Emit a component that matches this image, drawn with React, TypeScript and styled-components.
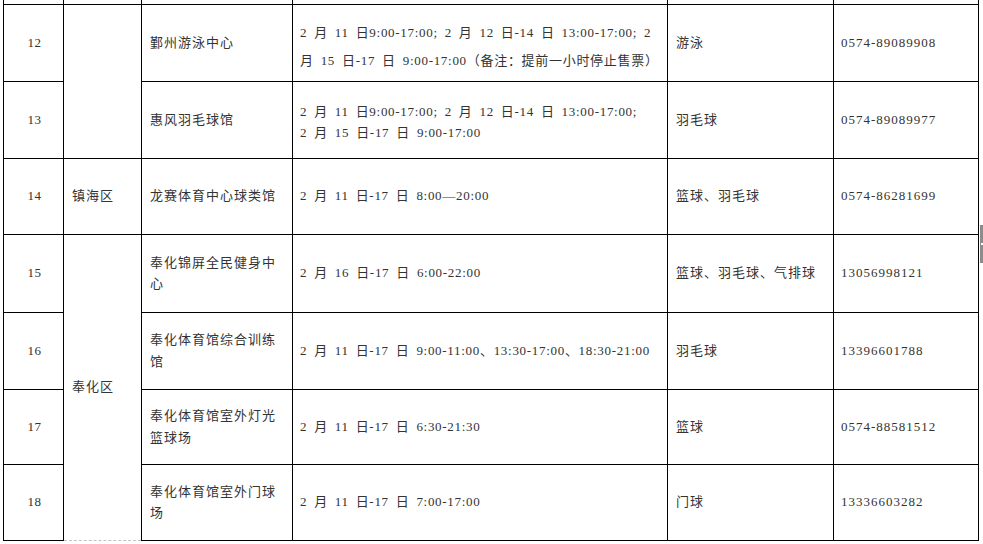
import styled, { createGlobalStyle } from 'styled-components'

const GlobalStyle = createGlobalStyle`
  html, body {
    margin: 0;
    padding: 0;
    background: #fff;
  }
  body {
    font-family: "Liberation Serif", "Noto Sans CJK SC", serif;
    color: #333;
  }
`

const Page = styled.div`
  position: relative;
  width: 983px;
  height: 544px;
  overflow: hidden;
  padding-left: 3px;
  box-sizing: border-box;
`

const Table = styled.table`
  border-collapse: collapse;
  table-layout: fixed;
  width: 976px;
`

const Row = styled.tr<{ $h: number }>`
  height: ${p => p.$h}px;
`

const Cell = styled.td<{ $lh?: number; $pt?: number }>`
  border: 1px solid #000;
  padding: ${p => p.$pt ?? 0}px 6px 0 8px;
  vertical-align: middle;
  text-align: left;
  font-size: 13px;
  letter-spacing: 1px;
  line-height: ${p => p.$lh ?? 21.5}px;
  white-space: nowrap;
  overflow: visible;
`

const StubCell = styled.td`
  border: 1px solid #000;
  border-top: none;
  padding: 0;
  height: 3px;
`

const NumCell = styled(Cell)`
  text-align: center;
  padding: 0 0 0 2px;
  letter-spacing: 0.5px;
`

const DistrictCell = styled(Cell)<{ $dashed?: boolean }>`
  border-bottom: ${p => (p.$dashed ? '1px dashed #c4c4c4' : '1px solid #000')};
`

const TimeCell = styled(Cell)`
  padding-left: 7px;
  letter-spacing: 0.7px;
  word-spacing: 3px;
`

const PhoneCell = styled(Cell)`
  padding-left: 7px;
  letter-spacing: 1px;
`

const Line = styled.span`
  display: block;
`

const EdgeTab = styled.div`
  position: absolute;
  right: 0;
  top: 225px;
  width: 3px;
  height: 38px;
  background: #8c8c8c;

  &::after {
    content: '';
    position: absolute;
    left: 1px;
    right: 0;
    top: 18px;
    height: 2px;
    background: #fff;
  }
`

type Venue = {
  no: string
  h: number
  district?: { name: string; span: number; dashed?: boolean }
  skipDistrict?: boolean
  name: string[]
  time: string[]
  timeLh?: number
  timePt?: number
  sport: string
  phone: string
}

const venues: Venue[] = [
  {
    no: '12',
    h: 77,
    district: { name: '', span: 2 },
    name: ['鄞州游泳中心'],
    time: [
      '2 月 11 日9:00-17:00; 2 月 12 日-14 日 13:00-17:00; 2',
      '月 15 日-17 日 9:00-17:00（备注：提前一小时停止售票）',
    ],
    timeLh: 28,
    timePt: 8,
    sport: '游泳',
    phone: '0574-89089908',
  },
  {
    no: '13',
    h: 77,
    skipDistrict: true,
    name: ['惠风羽毛球馆'],
    time: ['2 月 11 日9:00-17:00; 2 月 12 日-14 日 13:00-17:00;', '2 月 15 日-17 日 9:00-17:00'],
    timePt: 5,
    sport: '羽毛球',
    phone: '0574-89089977',
  },
  {
    no: '14',
    h: 76,
    district: { name: '镇海区', span: 1 },
    name: ['龙赛体育中心球类馆'],
    time: ['2 月 11 日-17 日 8:00—20:00'],
    sport: '篮球、羽毛球',
    phone: '0574-86281699',
  },
  {
    no: '15',
    h: 78,
    district: { name: '奉化区', span: 4, dashed: true },
    name: ['奉化锦屏全民健身中', '心'],
    time: ['2 月 16 日-17 日 6:00-22:00'],
    sport: '篮球、羽毛球、气排球',
    phone: '13056998121',
  },
  {
    no: '16',
    h: 77,
    skipDistrict: true,
    name: ['奉化体育馆综合训练', '馆'],
    time: ['2 月 11 日-17 日 9:00-11:00、13:30-17:00、18:30-21:00'],
    sport: '羽毛球',
    phone: '13396601788',
  },
  {
    no: '17',
    h: 75,
    skipDistrict: true,
    name: ['奉化体育馆室外灯光', '篮球场'],
    time: ['2 月 11 日-17 日 6:30-21:30'],
    sport: '篮球',
    phone: '0574-88581512',
  },
  {
    no: '18',
    h: 76,
    skipDistrict: true,
    name: ['奉化体育馆室外门球', '场'],
    time: ['2 月 11 日-17 日 7:00-17:00'],
    sport: '门球',
    phone: '13336603282',
  },
]

const columns = [60, 78, 151, 375, 166, 145]

export default function App() {
  return (
    <Page>
      <GlobalStyle />
      <Table>
        <colgroup>
          {columns.map((w, i) => (
            <col key={i} style={{ width: w }} />
          ))}
        </colgroup>
        <tbody>
          <Row $h={4}>
            {columns.map((_, i) => (
              <StubCell key={i} />
            ))}
          </Row>
          {venues.map(v => (
            <Row key={v.no} $h={v.h}>
              <NumCell>{v.no}</NumCell>
              {!v.skipDistrict && v.district && (
                <DistrictCell rowSpan={v.district.span} $dashed={v.district.dashed}>
                  {v.district.name}
                </DistrictCell>
              )}
              <Cell>
                {v.name.map((t, i) => (
                  <Line key={i}>{t}</Line>
                ))}
              </Cell>
              <TimeCell $lh={v.timeLh} $pt={v.timePt}>
                {v.time.map((t, i) => (
                  <Line key={i}>{t}</Line>
                ))}
              </TimeCell>
              <Cell>{v.sport}</Cell>
              <PhoneCell>{v.phone}</PhoneCell>
            </Row>
          ))}
        </tbody>
      </Table>
      <EdgeTab />
    </Page>
  )
}
